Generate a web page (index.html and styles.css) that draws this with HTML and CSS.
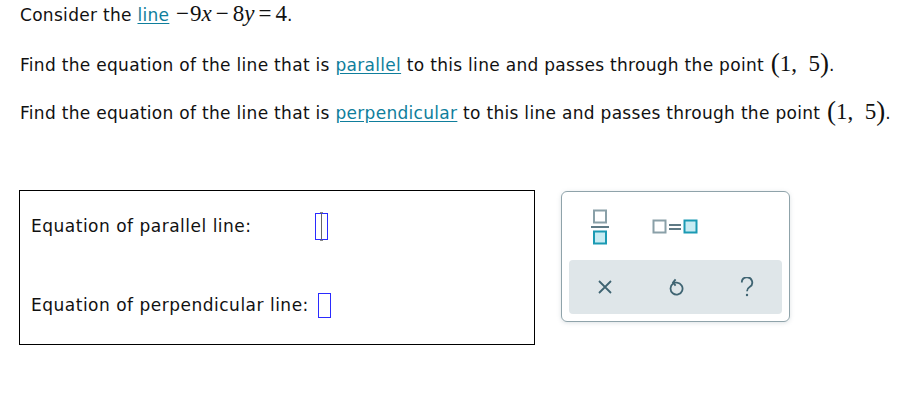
FILE: index.html
```html
<!DOCTYPE html>
<html>
<head>
<meta charset="utf-8">
<link rel="stylesheet" href="styles.css">
</head>
<body>
<div class="page">
  <p class="q">Consider the <a class="lnk">line</a> <span class="math"><span class="un">−</span>9<i>x</i><span class="op">−</span>8<i>y</i><span class="op">=</span>4</span>.</p>
  <p class="q">Find the equation of the line that is <a class="lnk">parallel</a> to this line and passes through the point <span class="math"><span class="paren">(</span>1,&nbsp; 5<span class="paren">)</span></span>.</p>
  <p class="q">Find the equation of the line that is <a class="lnk">perpendicular</a> to this line and passes through the point <span class="math"><span class="paren">(</span>1,&nbsp; 5<span class="paren">)</span></span>.</p>

  <div class="work">
    <div class="answers">
      <div class="row row1">
        <span class="label">Equation of parallel line:</span>
        <span class="input active"><span class="cursor"></span></span>
      </div>
      <div class="row row2">
        <span class="label">Equation of perpendicular line:</span>
        <span class="input"></span>
      </div>
    </div>

    <div class="palette">
      <div class="tools">
        <svg class="ico-frac" width="20" height="36" viewBox="0 0 20 36">
          <rect x="4" y="1.5" width="12" height="12" fill="#fff" stroke="#8aa0a8" stroke-width="2"/>
          <rect x="1" y="17" width="18" height="2" fill="#5f7a85"/>
          <rect x="4" y="22.5" width="12" height="12" fill="#c8ecf3" stroke="#1b9ab3" stroke-width="2"/>
        </svg>
        <svg class="ico-eq" width="46" height="16" viewBox="0 0 46 16">
          <rect x="1.5" y="1.5" width="12" height="12" fill="#fff" stroke="#8aa0a8" stroke-width="2"/>
          <rect x="17" y="5" width="12" height="2" fill="#5f7a85"/>
          <rect x="17" y="9" width="12" height="2" fill="#5f7a85"/>
          <rect x="32.5" y="1.5" width="12" height="12" fill="#c8ecf3" stroke="#1b9ab3" stroke-width="2"/>
        </svg>
      </div>
      <div class="actions">
        <span class="act">
          <svg width="16" height="16" viewBox="0 0 16 16">
            <path d="M2 2 L14 14 M14 2 L2 14" stroke="#3f6472" stroke-width="1.8" fill="none"/>
          </svg>
        </span>
        <span class="act">
          <svg width="16" height="18" viewBox="0 0 16 18">
            <path d="M5.2 5.6 A6 6 0 1 0 9 4.6 L6 4.6" stroke="#3f6472" stroke-width="1.8" fill="none"/>
            <path d="M7.6 1.4 L5 4.6 L7.6 7.6" stroke="#3f6472" stroke-width="1.8" fill="none"/>
          </svg>
        </span>
        <span class="act">
          <svg width="14" height="20" viewBox="0 0 14 20">
            <path d="M1.8 5.6 A5.2 5.2 0 1 1 9.6 10 C7.6 11.2 7 12 7 14.2" stroke="#3f6472" stroke-width="1.8" fill="none"/>
            <circle cx="7" cy="18" r="1.2" fill="#3f6472"/>
          </svg>
        </span>
      </div>
    </div>
  </div>
</div>
</body>
</html>
```

FILE: styles.css
```css
html, body {
  margin: 0;
  padding: 0;
  background: #fff;
}

.page {
  padding: 1px 0 0 20px;
  font-family: "DejaVu Sans", Verdana, sans-serif;
  font-size: 17px;
  letter-spacing: 0.3px;
  color: #111;
}

.q {
  margin: 0;
  height: 48px;
  line-height: 26px;
  white-space: nowrap;
}

.lnk {
  color: #0f7e9c;
  text-decoration: underline;
  text-underline-offset: 2px;
}

.math {
  font-family: "Liberation Serif", "Times New Roman", serif;
  font-size: 23px;
  letter-spacing: 0;
  margin-left: 1px;
}

.math i {
  font-style: italic;
}

.un {
  margin-right: 1px;
}

.op {
  margin: 0 4px 0 4px;
}

.paren {
  font-size: 27px;
  position: relative;
  top: 1px;
}

.work {
  display: flex;
  align-items: flex-start;
  gap: 26px;
  margin-top: 45px;
  margin-left: -1px;
}

.answers {
  width: 516px;
  height: 155px;
  box-sizing: border-box;
  border: 1px solid #000;
  display: grid;
  grid-template-columns: auto auto;
  grid-template-rows: 72px 80px;
  justify-content: start;
  column-gap: 9px;
  padding-left: 11px;
}

.row {
  display: contents;
}

.label {
  align-self: center;
  color: #111;
  letter-spacing: 0.5px;
}

.row1 .label {
  margin-top: -2px;
}

.row2 .label {
  margin-top: 4px;
}

.input {
  align-self: center;
  display: block;
  width: 11px;
  height: 23px;
  border: 1px solid #2b2bff;
  position: relative;
}

.row2 .input {
  margin-top: 4px;
}

.input.active {
  height: 25px;
  margin-left: -3px;
  margin-top: -2px;
}

.cursor {
  position: absolute;
  left: 4px;
  top: -2px;
  width: 3px;
  height: 29px;
  background: linear-gradient(to right, transparent 1px, #666 1px, #666 2px, transparent 2px);
  border-top: 1px solid #888;
  border-bottom: 1px solid #888;
  box-sizing: border-box;
}

.palette {
  margin-top: 1px;
  width: 229px;
  height: 131px;
  box-sizing: border-box;
  border: 1px solid #8fa3aa;
  border-radius: 6px;
  box-shadow: 0 1px 4px rgba(120, 140, 150, 0.25);
  padding: 0 7px 7px 7px;
  display: flex;
  flex-direction: column;
}

.tools {
  height: 68px;
  flex: none;
  display: flex;
  align-items: center;
  padding-left: 21px;
  gap: 42px;
}

.ico-frac,
.ico-eq {
  margin-top: 1px;
}

.actions {
  flex: 1;
  background: #dfe6e9;
  border-radius: 4px;
  display: grid;
  grid-template-columns: 71px 71px 71px;
  align-items: center;
}

.act {
  display: flex;
  justify-content: center;
  align-items: center;
}

.act svg {
  display: block;
}
```
